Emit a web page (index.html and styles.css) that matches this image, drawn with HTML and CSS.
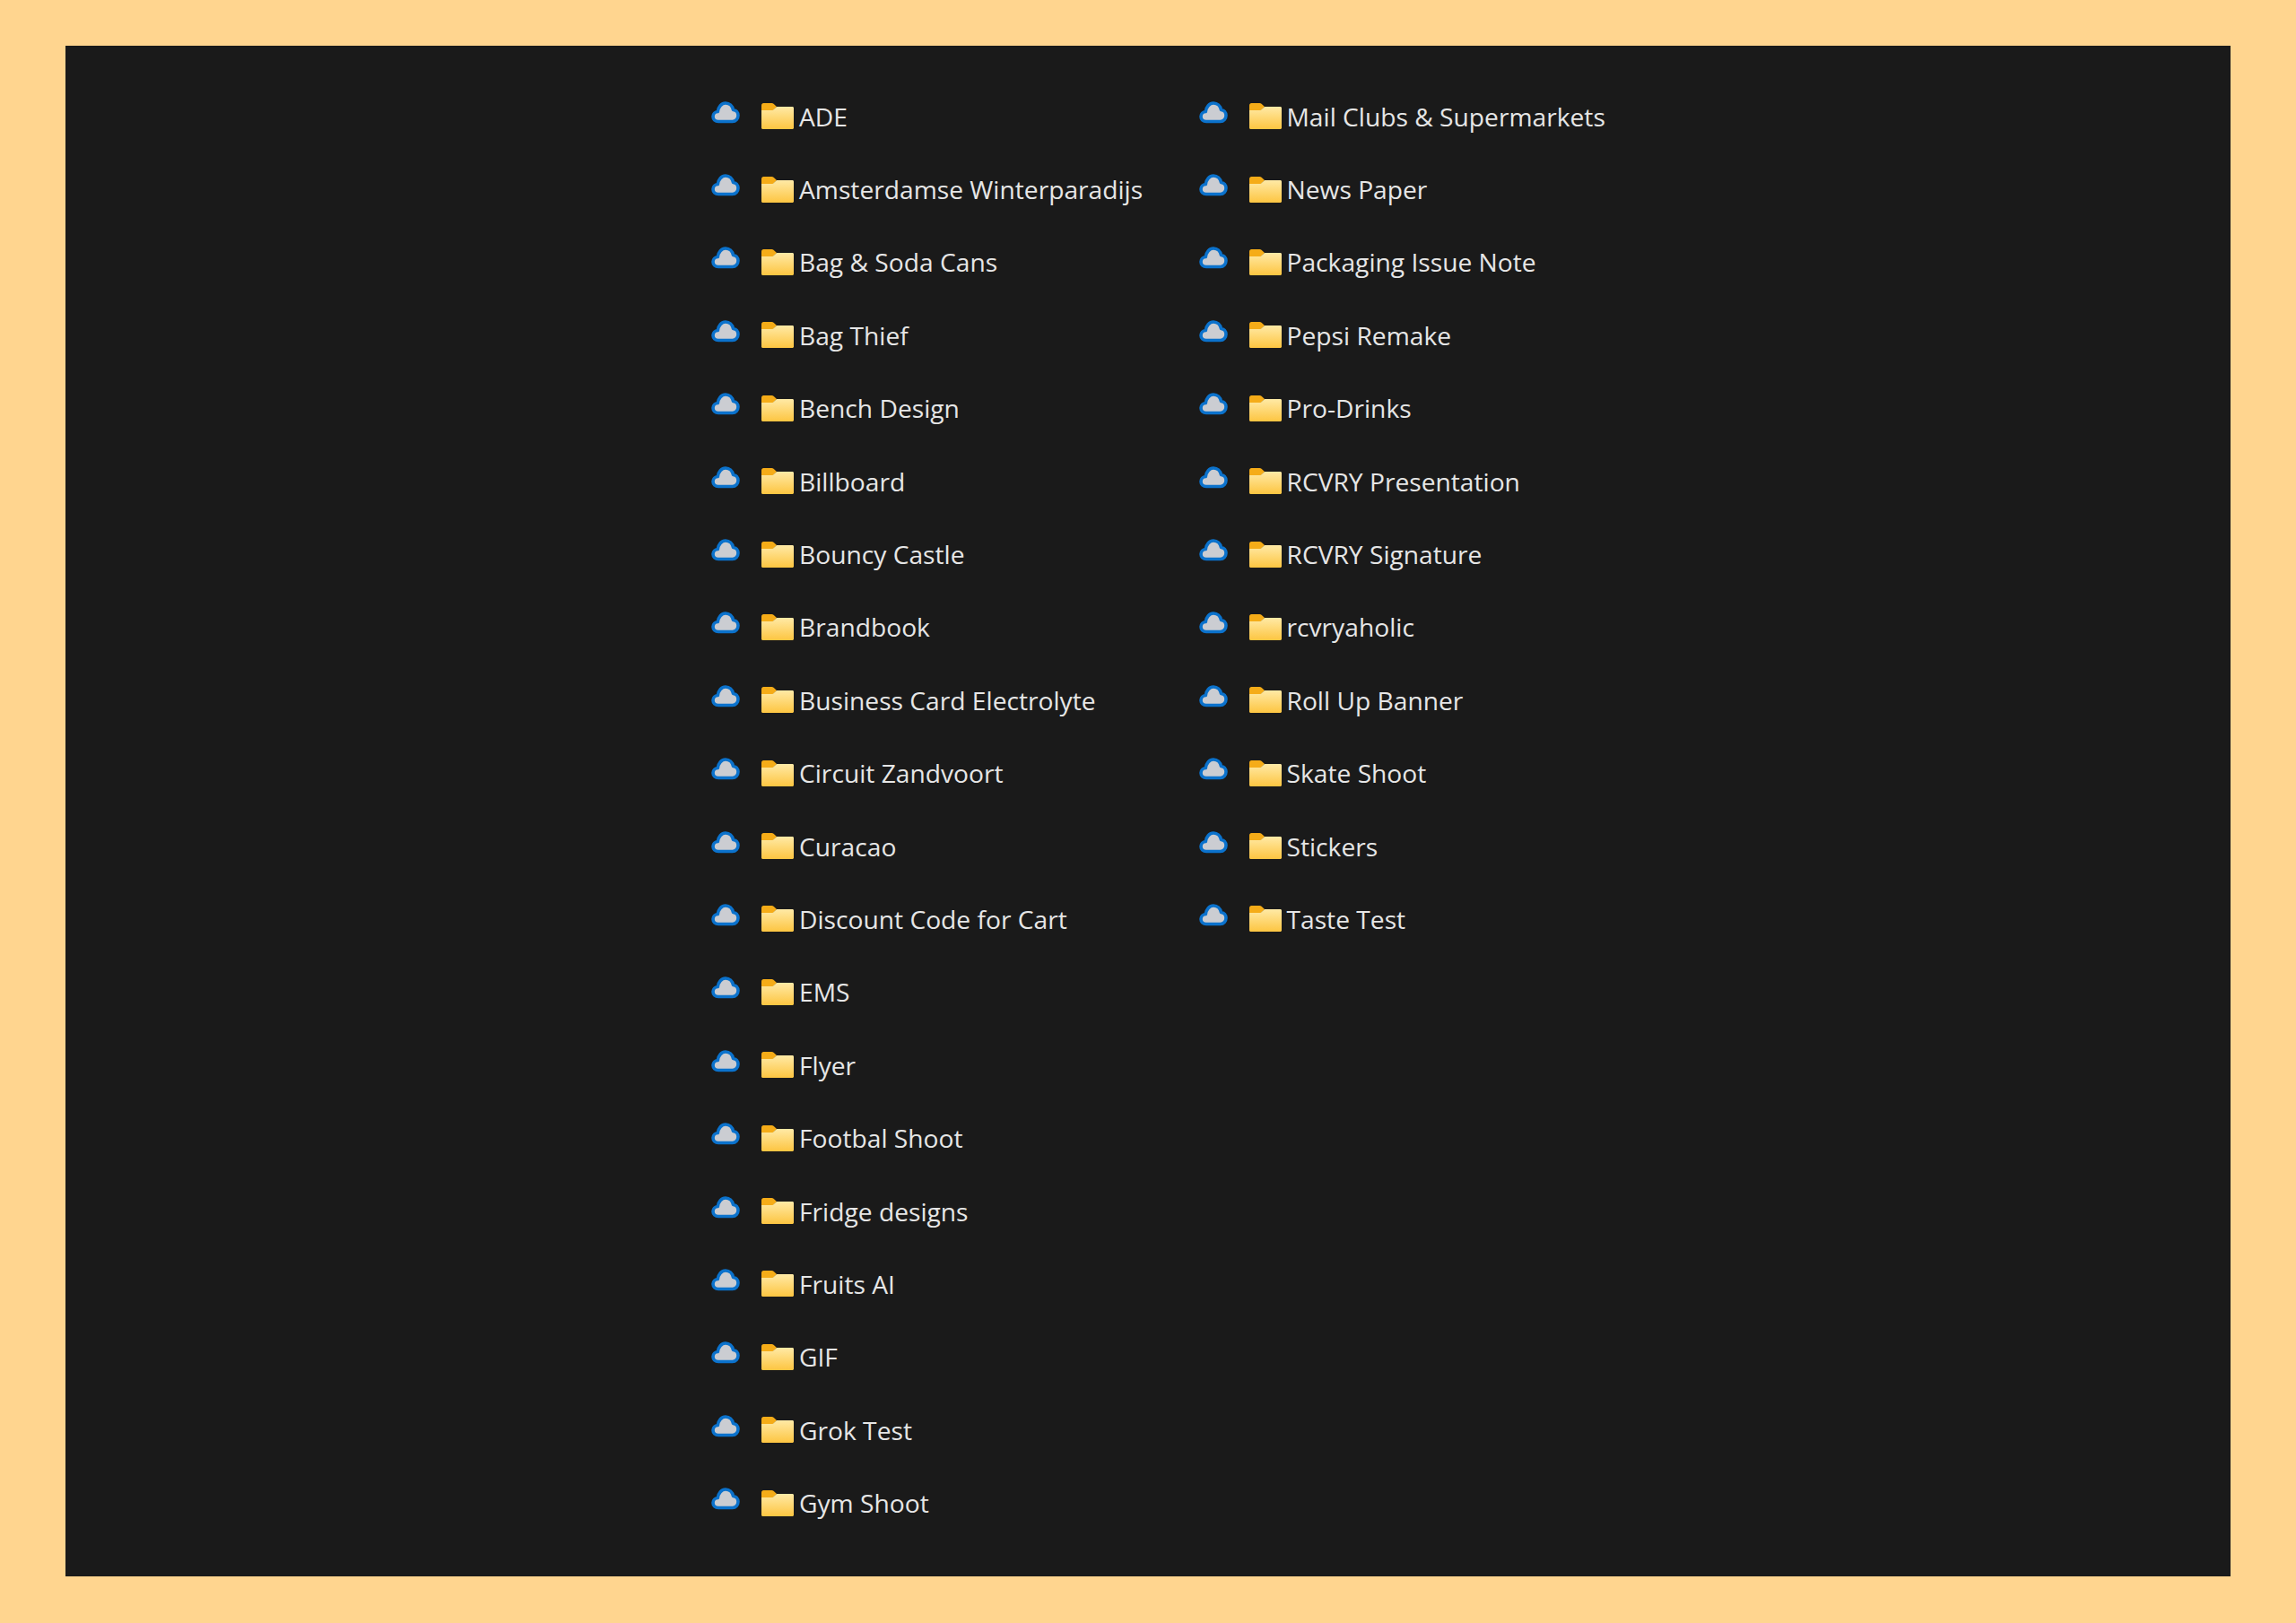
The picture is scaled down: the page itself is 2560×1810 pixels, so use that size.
FILE: index.html
```html
<!DOCTYPE html>
<html lang="en">
<head>
<meta charset="utf-8">
<title>Folders</title>
<link rel="stylesheet" href="styles.css">
</head>
<body>
<svg class="defs" width="0" height="0" aria-hidden="true">
  <defs>
    <linearGradient id="fg" x1="0" y1="0" x2="0" y2="1">
      <stop offset="0" stop-color="#ffeaa6"/>
      <stop offset="1" stop-color="#fdc541"/>
    </linearGradient>
    <symbol id="cloud" viewBox="0 0 32 26">
      <path d="M8 23.500C4.500 23.500 2 21 2 18c0-3 2.300-5.300 5.300-5.500C8 7 11.500 3 16 3c4.300 0 7.700 3.200 8.500 7.500 3.200.3 5.500 3 5.500 6.300 0 3.700-2.700 6.700-6.300 6.700z" fill="#cbcdd2" stroke="#0b72cc" stroke-width="3.600" stroke-linejoin="round"/>
    </symbol>
    <symbol id="folder" viewBox="0 0 36 29">
      <path d="M0 2.500C0 1.200 1 0 2.300 0h9.200c.8 0 1.400.3 2 .8L17 4l-4 4H0z" fill="#f5ac18"/>
      <path d="M0 8h12.500L17 4h17.500C35.400 4 36 4.700 36 5.500v22c0 .9-.7 1.500-1.500 1.500h-33C.7 29 0 28.400 0 27.500z" fill="url(#fg)"/>
    </symbol>
  </defs>
</svg>
<main class="panel">
  <ul class="list">
    <li class="row"><svg class="cloud"><use href="#cloud"/></svg><svg class="folder"><use href="#folder"/></svg><span class="name">ADE</span></li>
    <li class="row"><svg class="cloud"><use href="#cloud"/></svg><svg class="folder"><use href="#folder"/></svg><span class="name">Amsterdamse Winterparadijs</span></li>
    <li class="row"><svg class="cloud"><use href="#cloud"/></svg><svg class="folder"><use href="#folder"/></svg><span class="name">Bag &amp; Soda Cans</span></li>
    <li class="row"><svg class="cloud"><use href="#cloud"/></svg><svg class="folder"><use href="#folder"/></svg><span class="name">Bag Thief</span></li>
    <li class="row"><svg class="cloud"><use href="#cloud"/></svg><svg class="folder"><use href="#folder"/></svg><span class="name">Bench Design</span></li>
    <li class="row"><svg class="cloud"><use href="#cloud"/></svg><svg class="folder"><use href="#folder"/></svg><span class="name">Billboard</span></li>
    <li class="row"><svg class="cloud"><use href="#cloud"/></svg><svg class="folder"><use href="#folder"/></svg><span class="name">Bouncy Castle</span></li>
    <li class="row"><svg class="cloud"><use href="#cloud"/></svg><svg class="folder"><use href="#folder"/></svg><span class="name">Brandbook</span></li>
    <li class="row"><svg class="cloud"><use href="#cloud"/></svg><svg class="folder"><use href="#folder"/></svg><span class="name">Business Card Electrolyte</span></li>
    <li class="row"><svg class="cloud"><use href="#cloud"/></svg><svg class="folder"><use href="#folder"/></svg><span class="name">Circuit Zandvoort</span></li>
    <li class="row"><svg class="cloud"><use href="#cloud"/></svg><svg class="folder"><use href="#folder"/></svg><span class="name">Curacao</span></li>
    <li class="row"><svg class="cloud"><use href="#cloud"/></svg><svg class="folder"><use href="#folder"/></svg><span class="name">Discount Code for Cart</span></li>
    <li class="row"><svg class="cloud"><use href="#cloud"/></svg><svg class="folder"><use href="#folder"/></svg><span class="name">EMS</span></li>
    <li class="row"><svg class="cloud"><use href="#cloud"/></svg><svg class="folder"><use href="#folder"/></svg><span class="name">Flyer</span></li>
    <li class="row"><svg class="cloud"><use href="#cloud"/></svg><svg class="folder"><use href="#folder"/></svg><span class="name">Footbal Shoot</span></li>
    <li class="row"><svg class="cloud"><use href="#cloud"/></svg><svg class="folder"><use href="#folder"/></svg><span class="name">Fridge designs</span></li>
    <li class="row"><svg class="cloud"><use href="#cloud"/></svg><svg class="folder"><use href="#folder"/></svg><span class="name">Fruits AI</span></li>
    <li class="row"><svg class="cloud"><use href="#cloud"/></svg><svg class="folder"><use href="#folder"/></svg><span class="name">GIF</span></li>
    <li class="row"><svg class="cloud"><use href="#cloud"/></svg><svg class="folder"><use href="#folder"/></svg><span class="name">Grok Test</span></li>
    <li class="row"><svg class="cloud"><use href="#cloud"/></svg><svg class="folder"><use href="#folder"/></svg><span class="name">Gym Shoot</span></li>
    <li class="row"><svg class="cloud"><use href="#cloud"/></svg><svg class="folder"><use href="#folder"/></svg><span class="name">Mail Clubs &amp; Supermarkets</span></li>
    <li class="row"><svg class="cloud"><use href="#cloud"/></svg><svg class="folder"><use href="#folder"/></svg><span class="name">News Paper</span></li>
    <li class="row"><svg class="cloud"><use href="#cloud"/></svg><svg class="folder"><use href="#folder"/></svg><span class="name">Packaging Issue Note</span></li>
    <li class="row"><svg class="cloud"><use href="#cloud"/></svg><svg class="folder"><use href="#folder"/></svg><span class="name">Pepsi Remake</span></li>
    <li class="row"><svg class="cloud"><use href="#cloud"/></svg><svg class="folder"><use href="#folder"/></svg><span class="name">Pro-Drinks</span></li>
    <li class="row"><svg class="cloud"><use href="#cloud"/></svg><svg class="folder"><use href="#folder"/></svg><span class="name">RCVRY Presentation</span></li>
    <li class="row"><svg class="cloud"><use href="#cloud"/></svg><svg class="folder"><use href="#folder"/></svg><span class="name">RCVRY Signature</span></li>
    <li class="row"><svg class="cloud"><use href="#cloud"/></svg><svg class="folder"><use href="#folder"/></svg><span class="name">rcvryaholic</span></li>
    <li class="row"><svg class="cloud"><use href="#cloud"/></svg><svg class="folder"><use href="#folder"/></svg><span class="name">Roll Up Banner</span></li>
    <li class="row"><svg class="cloud"><use href="#cloud"/></svg><svg class="folder"><use href="#folder"/></svg><span class="name">Skate Shoot</span></li>
    <li class="row"><svg class="cloud"><use href="#cloud"/></svg><svg class="folder"><use href="#folder"/></svg><span class="name">Stickers</span></li>
    <li class="row"><svg class="cloud"><use href="#cloud"/></svg><svg class="folder"><use href="#folder"/></svg><span class="name">Taste Test</span></li>
  </ul>
</main>
</body>
</html>
```
FILE: styles.css
```css
html, body {
  margin: 0;
  padding: 0;
}
body {
  background: #ffd58f;
  height: 1810px;
  overflow: hidden;
  padding: 51px 73px 52px;
  box-sizing: border-box;
  font-family: "Open Sans", "Noto Sans", sans-serif;
}
.defs {
  display: block;
  height: 0;
}
.panel {
  background: #1a1a1a;
  height: 1707px;
  padding: 38px 0 0 720px;
  box-sizing: border-box;
}
.list {
  list-style: none;
  margin: 0;
  padding: 0;
  display: grid;
  grid-auto-flow: column;
  grid-template-rows: repeat(20, 81.4px);
  grid-auto-columns: 543.5px;
}
.row {
  display: flex;
  align-items: center;
  color: #e6e6e6;
  font-size: 28.2px;
  white-space: nowrap;
}
.cloud {
  width: 32px;
  height: 26px;
  margin-right: 24px;
  transform: translateY(-5px);
  filter: blur(0.7px);
}
.folder {
  width: 36px;
  height: 29px;
  margin-right: 6px;
  filter: blur(0.4px);
}
.name {
  line-height: 40px;
}
```
